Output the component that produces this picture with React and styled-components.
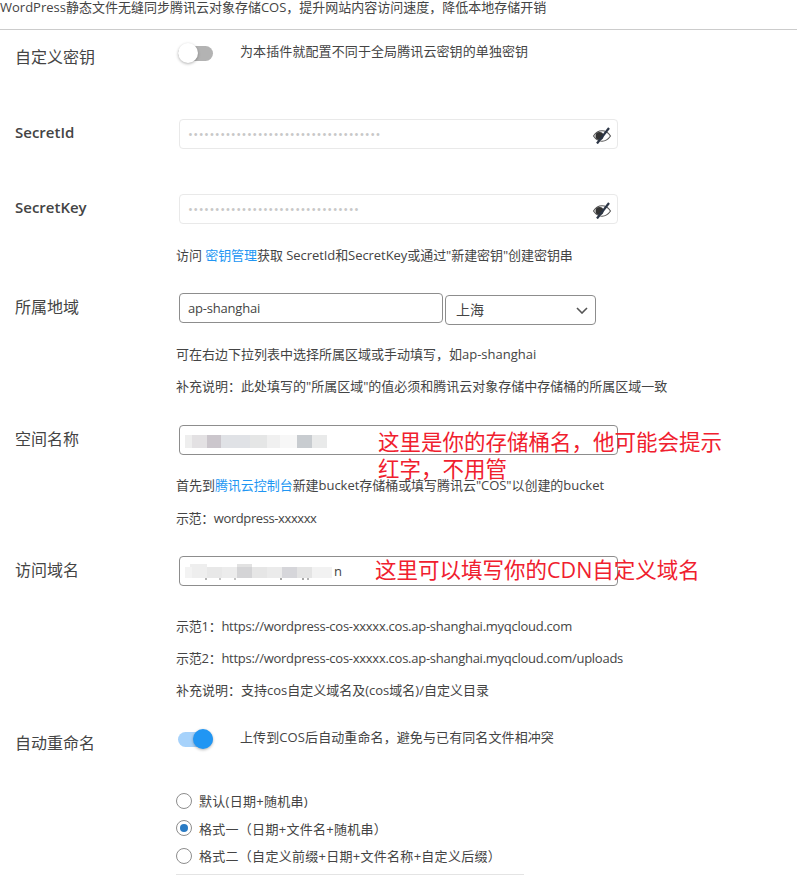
import React from "react";
import styled, { createGlobalStyle } from "styled-components";

const GlobalStyle = createGlobalStyle`
  html, body {
    margin: 0;
    padding: 0;
    background: #fff;
    overflow: hidden;
  }
  body {
    font-family: "Open Sans", "Noto Sans CJK SC", sans-serif;
    color: #444;
  }
`;

const Page = styled.div`
  width: 797px;
  height: 876px;
  overflow: hidden;
`;

const Intro = styled.p`
  margin: 0;
  height: 29px;
  border-bottom: 1px solid #ccc;
  font-size: 13px;
  line-height: 14px;
  white-space: nowrap;
`;

// one line of the settings form: label column + control column
const Row = styled.div`
  display: flex;
  align-items: flex-start;
  margin-top: ${(p) => p.$top}px;
  height: 30px;
`;

const Label = styled.div`
  width: 161px;
  padding-left: 15px;
  flex: none;
  font-size: ${(p) => (p.$strong ? 15 : 16)}px;
  font-weight: ${(p) => (p.$strong ? 600 : 400)};
  line-height: ${(p) => (p.$strong ? 26 : 28)}px;
`;

const Control = styled.div`
  display: flex;
  align-items: flex-start;
  flex: 1;
  position: relative;
`;

const Field = styled.div`
  position: relative;
  margin-left: 3px;
  width: ${(p) => p.$width || 439}px;
  height: 30px;
`;

const TextInput = styled.input`
  box-sizing: border-box;
  width: 100%;
  height: 30px;
  padding: 0 30px 0 ${(p) => p.$indent || 8}px;
  border: 1px solid ${(p) => (p.$soft ? "#e9e9e9" : "#8d8d8d")};
  border-radius: 4px;
  background: #fff;
  color: ${(p) => (p.$soft ? "#c8c8c8" : "#444")};
  font-family: inherit;
  font-size: 13px;
  letter-spacing: ${(p) => (p.$soft ? 0.47 : -0.2)}px;
  outline: none;
`;

const EyeButton = styled.span`
  position: absolute;
  right: 6px;
  top: 7px;
  display: flex;
`;

const Mosaic = styled.div`
  position: absolute;
  left: ${(p) => p.$left}px;
  top: ${(p) => p.$top}px;
  display: flex;
  filter: blur(0.6px);
`;

const Tile = styled.span`
  display: block;
  width: ${(p) => p.$w}px;
  height: ${(p) => p.$h}px;
  background: ${(p) => p.$c};
`;

const SelectBox = styled.div`
  position: relative;
  margin: 2px 0 0 2px;
  width: 151px;
  height: 30px;
`;

const Select = styled.select`
  box-sizing: border-box;
  appearance: none;
  width: 100%;
  height: 100%;
  padding: 0 0 2px 10px;
  border: 1px solid #8d8d8d;
  border-radius: 4px;
  background: #fff;
  color: #444;
  font-family: inherit;
  font-size: 14px;
`;

const Chevron = styled.svg`
  position: absolute;
  right: 8px;
  top: 12px;
  pointer-events: none;
`;

const Switch = styled.span`
  position: relative;
  display: block;
  flex: none;
  width: 35px;
  height: 15px;
  margin: 3px 27px 0 2px;
  border-radius: 8px;
  background: ${(p) => (p.$on ? "#a6d2fb" : "#b3b3b3")};
`;

const Knob = styled.span`
  position: absolute;
  top: -3px;
  left: ${(p) => (p.$on ? 15 : 0)}px;
  width: 20px;
  height: 20px;
  border-radius: 50%;
  background: ${(p) => (p.$on ? "#2196f3" : "#fff")};
  box-shadow: 0 1px 3px rgba(0, 0, 0, 0.3);
`;

const SwitchText = styled.span`
  font-size: 13px;
  line-height: 16px;
  letter-spacing: 0.1px;
`;

const Help = styled.div`
  margin-top: ${(p) => p.$top || 0}px;
  padding-left: 176px;
  height: 32px;
  font-size: 13px;
  line-height: 32px;
  letter-spacing: ${(p) => p.$track || 0}px;
  white-space: nowrap;
`;

const Link = styled.a`
  color: #2196f3;
  text-decoration: none;
`;

const RadioGroup = styled.div`
  display: flex;
  flex-direction: column;
  margin-top: ${(p) => p.$top}px;
  padding-left: 176px;
`;

const RadioRow = styled.label`
  display: flex;
  align-items: center;
  gap: 7px;
  height: 27.5px;
  font-size: 13px;
  letter-spacing: 0.28px;
`;

const RadioDot = styled.span`
  box-sizing: border-box;
  display: flex;
  align-items: center;
  justify-content: center;
  width: 16px;
  height: 16px;
  border: 1px solid #8d8d8d;
  border-radius: 50%;
  &::after {
    content: "";
    display: ${(p) => (p.$checked ? "block" : "none")};
    width: 8px;
    height: 8px;
    border-radius: 50%;
    background: #2a7bc4;
  }
`;

const NextInput = styled.div`
  margin: 4px 0 0 176px;
  width: 348px;
  height: 20px;
  border-top: 1px solid #e4e4e4;
`;

// red notes somebody typed over the screenshot
const Note = styled.div`
  position: absolute;
  left: ${(p) => p.$left}px;
  top: ${(p) => p.$top}px;
  width: ${(p) => p.$width}px;
  color: #f0202e;
  font-size: 21.5px;
  line-height: 27px;
`;

const EyeSlash = () => (
  <svg width="20" height="18" viewBox="0 0 20 18" fill="none">
    <path d="M1.5 10C4 6.3 7 4.8 10 4.8s6 1.5 8.5 5.2c-2.5 3.7-5.5 5.2-8.5 5.2s-6-1.5-8.5-5.2z" stroke="#555" strokeWidth="1.1" />
    <circle cx="7.5" cy="10" r="4" fill="#333" />
    <path d="M5 17.5 17 2" stroke="#2b3545" strokeWidth="2.2" />
  </svg>
);

const bucketTiles = [
  [7, "#eeeeee"], [15, "#e3e1e3"], [14, "#cbc6cc"], [29, "#e0e2e6"], [17, "#e5e6e6"], [13, "#f0f0f0"],
  [17, "#f7f7f7"], [15, "#c8ccd0"], [15, "#e9eaea"],
];

const domainTiles = [
  [7, "#f3f3f3"], [15, "#eeeeee"], [15, "#e8e8e8"], [15, "#ececec"], [15, "#d4d4d6"], [15, "#e6e6e6"],
  [15, "#ebebeb"], [15, "#d6d6da"], [15, "#e4e4e4"], [20, "#f2f2f2"],
];

// bits of the blurred text still showing under the mosaic
const speckTiles = [
  [2, "#b5b5b5"], [12, "#fff"], [2, "#c4c4c4"], [13, "#fff"], [2, "#c4c4c4"], [44, "#fff"],
  [2, "#a8a8a8"], [20, "#fff"], [2, "#a8a8a8"], [3, "#fff"], [2, "#b5b5b5"],
];

export default function App() {
  return (
    <Page>
      <GlobalStyle />
      <Intro>WordPress静态文件无缝同步腾讯云对象存储COS，提升网站内容访问速度，降低本地存储开销</Intro>

      <Row $top={13}>
        <Label>自定义密钥</Label>
        <Control>
          <Switch>
            <Knob />
          </Switch>
          <SwitchText>为本插件就配置不同于全局腾讯云密钥的单独密钥</SwitchText>
        </Control>
      </Row>

      <Row $top={46}>
        <Label $strong>SecretId</Label>
        <Field>
          <TextInput $soft type="password" readOnly value="abcdefghijklmnopqrstuvwxyz0123456789" />
          <EyeButton><EyeSlash /></EyeButton>
        </Field>
      </Row>

      <Row $top={45}>
        <Label $strong>SecretKey</Label>
        <Field>
          <TextInput $soft type="password" readOnly value="abcdefghijklmnopqrstuvwxyz012345" />
          <EyeButton><EyeSlash /></EyeButton>
        </Field>
      </Row>

      <Help $top={15} $track={-0.06}>
        访问 <Link>密钥管理</Link>获取 SecretId和SecretKey或通过"新建密钥"创建密钥串
      </Help>

      <Row $top={22}>
        <Label>所属地域</Label>
        <Field $width={264}>
          <TextInput readOnly value="ap-shanghai" />
        </Field>
        <SelectBox>
          <Select defaultValue="上海">
            <option>上海</option>
          </Select>
          <Chevron width="12" height="7" viewBox="0 0 12 7" fill="none">
            <path d="M1 1l5 5 5-5" stroke="#555" strokeWidth="1.6" />
          </Chevron>
        </SelectBox>
      </Row>

      <Help $top={15}>可在右边下拉列表中选择所属区域或手动填写，如ap-shanghai</Help>
      <Help>补充说明：此处填写的"所属区域"的值必须和腾讯云对象存储中存储桶的所属区域一致</Help>

      <Row $top={23}>
        <Label>空间名称</Label>
        <Control>
          <Field>
            <TextInput readOnly />
            <Mosaic $left={6} $top={10}>
              {bucketTiles.map(([w, c], i) => <Tile key={i} $w={w} $h={13} $c={c} />)}
            </Mosaic>
          </Field>
          <Note $left={202} $top={3} $width={350}>这里是你的存储桶名，他可能会提示红字，不用管</Note>
        </Control>
      </Row>

      <Help $top={14} $track={-0.04}>
        首先到<Link>腾讯云控制台</Link>新建bucket存储桶或填写腾讯云"COS"以创建的bucket
      </Help>
      <Help $top={1} $track={-0.4}>示范：wordpress-xxxxxx</Help>

      <Row $top={22}>
        <Label>访问域名</Label>
        <Control>
          <Field>
            <TextInput readOnly $indent={154} value="n" />
            <Mosaic $left={6} $top={11}>
              {domainTiles.map(([w, c], i) => <Tile key={i} $w={w} $h={11} $c={c} />)}
            </Mosaic>
            <Mosaic $left={11} $top={8}>
              <Tile $w={17} $h={3} $c="#eeeeee" />
              <Tile $w={30} $h={3} $c="#ffffff" />
              <Tile $w={15} $h={3} $c="#e2e2e2" />
            </Mosaic>
            <Mosaic $left={26} $top={22}>
              {speckTiles.map(([w, c], i) => <Tile key={i} $w={w} $h={2} $c={c} />)}
            </Mosaic>
          </Field>
          <Note $left={199} $top={0} $width={340}>这里可以填写你的CDN自定义域名</Note>
        </Control>
      </Row>

      <Help $top={24} $track={-0.26}>示范1：https://wordpress-cos-xxxxx.cos.ap-shanghai.myqcloud.com</Help>
      <Help $track={-0.26}>示范2：https://wordpress-cos-xxxxx.cos.ap-shanghai.myqcloud.com/uploads</Help>
      <Help>补充说明：支持cos自定义域名及(cos域名)/自定义目录</Help>

      <Row $top={23}>
        <Label>自动重命名</Label>
        <Control>
          <Switch $on>
            <Knob $on />
          </Switch>
          <SwitchText>上传到COS后自动重命名，避免与已有同名文件相冲突</SwitchText>
        </Control>
      </Row>

      <RadioGroup $top={28}>
        <RadioRow><RadioDot />默认(日期+随机串)</RadioRow>
        <RadioRow><RadioDot $checked />格式一（日期+文件名+随机串）</RadioRow>
        <RadioRow><RadioDot />格式二（自定义前缀+日期+文件名称+自定义后缀）</RadioRow>
      </RadioGroup>
      <NextInput />
    </Page>
  );
}
